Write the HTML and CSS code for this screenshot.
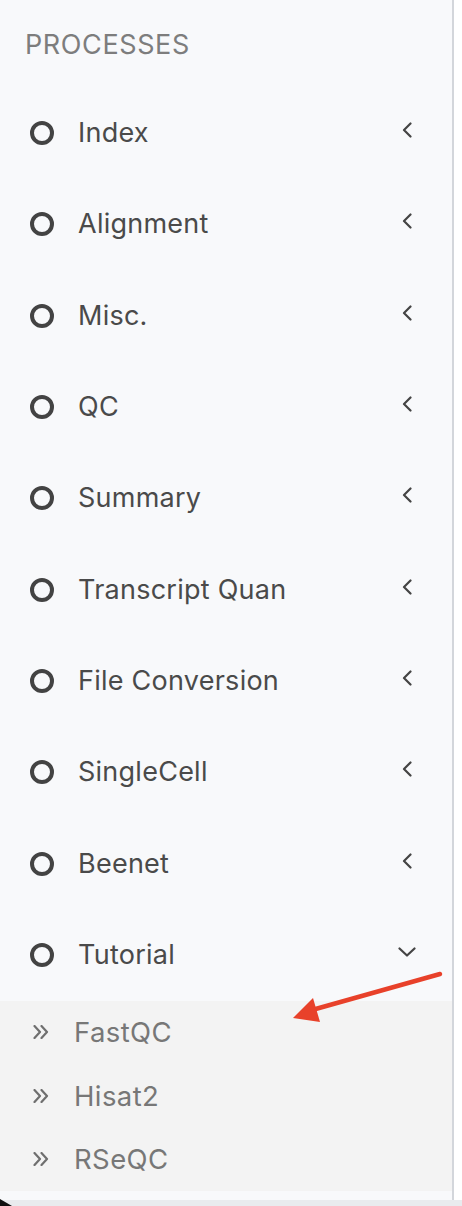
FILE: index.html
```html
<!DOCTYPE html>
<html>
<head>
<meta charset="utf-8">
<link rel="stylesheet" href="styles.css">
</head>
<body>
<div class="page">
  <nav class="sidebar">
    <div class="header">PROCESSES</div>
    <ul class="menu">
      <li class="item"><span class="ring"></span><span class="label">Index</span><svg class="chev" viewBox="0 0 10 16"><path d="M8.5 1.5 L2 8 L8.5 14.5"/></svg></li>
      <li class="item"><span class="ring"></span><span class="label">Alignment</span><svg class="chev" viewBox="0 0 10 16"><path d="M8.5 1.5 L2 8 L8.5 14.5"/></svg></li>
      <li class="item"><span class="ring"></span><span class="label">Misc.</span><svg class="chev" viewBox="0 0 10 16"><path d="M8.5 1.5 L2 8 L8.5 14.5"/></svg></li>
      <li class="item"><span class="ring"></span><span class="label">QC</span><svg class="chev" viewBox="0 0 10 16"><path d="M8.5 1.5 L2 8 L8.5 14.5"/></svg></li>
      <li class="item"><span class="ring"></span><span class="label">Summary</span><svg class="chev" viewBox="0 0 10 16"><path d="M8.5 1.5 L2 8 L8.5 14.5"/></svg></li>
      <li class="item"><span class="ring"></span><span class="label">Transcript Quan</span><svg class="chev" viewBox="0 0 10 16"><path d="M8.5 1.5 L2 8 L8.5 14.5"/></svg></li>
      <li class="item"><span class="ring"></span><span class="label">File Conversion</span><svg class="chev" viewBox="0 0 10 16"><path d="M8.5 1.5 L2 8 L8.5 14.5"/></svg></li>
      <li class="item"><span class="ring"></span><span class="label">SingleCell</span><svg class="chev" viewBox="0 0 10 16"><path d="M8.5 1.5 L2 8 L8.5 14.5"/></svg></li>
      <li class="item"><span class="ring"></span><span class="label">Beenet</span><svg class="chev" viewBox="0 0 10 16"><path d="M8.5 1.5 L2 8 L8.5 14.5"/></svg></li>
      <li class="item open"><span class="ring"></span><span class="label">Tutorial</span><svg class="chev-down" viewBox="0 0 18 10"><path d="M1.5 1.5 L9 8.5 L16.5 1.5"/></svg></li>
    </ul>
    <ul class="submenu">
      <li class="subitem"><svg class="dbl" viewBox="0 0 16 14"><path d="M1.5 1 L7 7 L1.5 13 M8.5 1 L14 7 L8.5 13"/></svg><span class="sublabel">FastQC</span></li>
      <li class="subitem"><svg class="dbl" viewBox="0 0 16 14"><path d="M1.5 1 L7 7 L1.5 13 M8.5 1 L14 7 L8.5 13"/></svg><span class="sublabel">Hisat2</span></li>
      <li class="subitem"><svg class="dbl" viewBox="0 0 16 14"><path d="M1.5 1 L7 7 L1.5 13 M8.5 1 L14 7 L8.5 13"/></svg><span class="sublabel">RSeQC</span></li>
    </ul>
  </nav>
  <div class="bottom-strip"></div>
  <div class="corner"></div>
  <svg class="arrow" viewBox="0 0 462 1206">
    <line x1="440" y1="974" x2="312" y2="1010" />
    <polygon points="293,1018 313,998 320,1022" />
  </svg>
</div>
</body>
</html>
```
FILE: styles.css
```css
* { box-sizing: border-box; }
html, body { margin: 0; padding: 0; background: #ffffff; }
body { font-family: Inter, "Noto Sans", "Liberation Sans", sans-serif; }
.page { position: relative; width: 462px; height: 1206px; overflow: hidden; }
.sidebar {
  width: 454px;
  height: 1200px;
  background: #f8f9fb;
  border-right: 2px solid #d3d6db;
}
.header {
  height: 87.3px;
  padding: 30px 0 0 25px;
  font-size: 27px;
  color: #7d7d7d;
  letter-spacing: 0.6px;
  line-height: 30px;
}
.menu, .submenu { list-style: none; margin: 0; padding: 0; }
.item {
  height: 91.33px;
  display: flex;
  align-items: center;
  padding-left: 30px;
  padding-right: 40px;
}
.ring {
  width: 24px;
  height: 24px;
  border: 4px solid #434343;
  border-radius: 50%;
  flex: none;
}
.label {
  margin-left: 24px;
  font-size: 27px;
  letter-spacing: 0.25px;
  color: #4a4a4a;
  flex: 1;
  line-height: 30px;
}
.chev { width: 10px; height: 16px; fill: none; stroke: #444; stroke-width: 2.2; stroke-linecap: round; stroke-linejoin: round; margin-top: -6px; }
.chev-down { width: 18px; height: 10px; fill: none; stroke: #444; stroke-width: 2.2; stroke-linecap: round; stroke-linejoin: round; margin-right: -4px; margin-top: -6px; }
.submenu { background: #f3f3f3; }
.subitem {
  height: 63.5px;
  display: flex;
  align-items: center;
  padding-left: 33px;
}
.dbl { width: 16px; height: 14px; fill: none; stroke: #6f6f6f; stroke-width: 2.2; stroke-linecap: round; stroke-linejoin: round; flex: none; }
.sublabel {
  margin-left: 25px;
  font-size: 27.5px;
  letter-spacing: 0.4px;
  color: #777777;
  line-height: 30px;
}
.bottom-strip { height: 6px; background: #e9ebee; }
.corner {
  position: absolute;
  left: 0;
  bottom: 0;
  width: 12px;
  height: 7px;
  background: #111;
  clip-path: polygon(0 0, 100% 100%, 0 100%);
}
.arrow { position: absolute; left: 0; top: 0; width: 462px; height: 1206px; pointer-events: none; }
.arrow line { stroke: #e8412a; stroke-width: 4.5; stroke-linecap: round; }
.arrow polygon { fill: #e8412a; }
```
